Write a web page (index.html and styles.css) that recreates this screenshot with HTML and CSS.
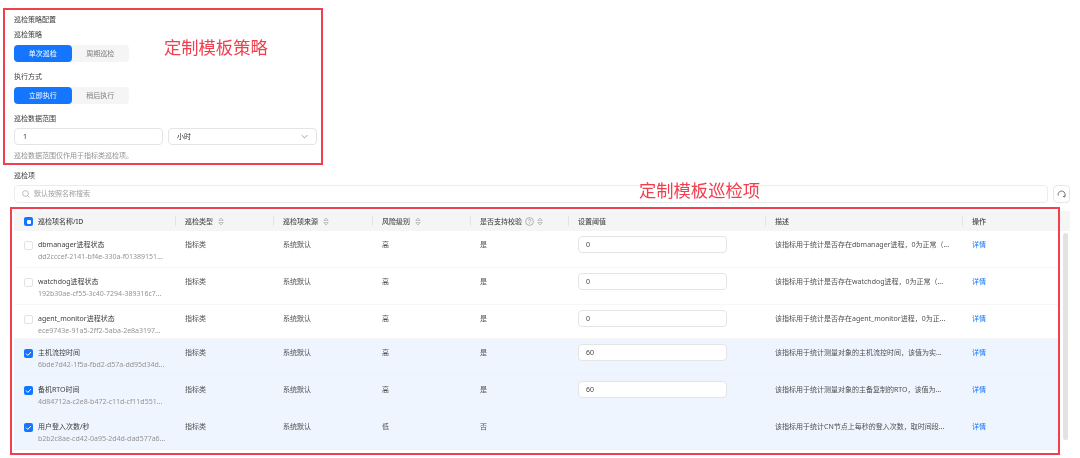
FILE: index.html
```html
<!DOCTYPE html>
<html lang="zh">
<head>
<meta charset="utf-8">
<title>定制模板</title>
<link rel="stylesheet" href="styles.css">
</head>
<body>
<main class="page">
  <section class="strategy">
    <div class="label first">巡检策略配置</div>
    <div class="label l-a">巡检策略</div>
    <div class="seg"><span class="seg-item on">单次巡检</span><span class="seg-item">周期巡检</span></div>
    <div class="label l-b">执行方式</div>
    <div class="seg"><span class="seg-item on">立即执行</span><span class="seg-item">稍后执行</span></div>
    <div class="label l-b">巡检数据范围</div>
    <div class="range">
      <div class="field">1</div>
      <div class="field select">小时<svg class="chev" viewBox="0 0 10 6"><path d="M1 1l4 4 4-4" fill="none" stroke="#777" stroke-width="1"/></svg></div>
    </div>
    <div class="hint">巡检数据范围仅作用于指标类巡检项。</div>
    <div class="note note-a">定制模板策略</div>
  </section>

  <section class="items">
    <div class="label">巡检项</div>
    <div class="search-row">
      <div class="search">
        <svg class="s-ico" viewBox="0 0 10 10"><circle cx="4.4" cy="4.4" r="3.6" fill="none" stroke="#999" stroke-width=".8"/><path d="M7 7l2.4 2.4" stroke="#999" stroke-width=".8"/></svg>
        <span>默认按照名称搜索</span>
      </div>
      <button class="refresh" type="button"><svg viewBox="0 0 10 10"><path d="M1.4 6.2A3.9 3.9 0 1 1 8.2 7.4" fill="none" stroke="#555" stroke-width=".9"/><path d="M9.4 6.2L8.2 8 6.6 6.9" fill="none" stroke="#555" stroke-width=".9"/></svg></button>
    </div>
    <div class="note note-b">定制模板巡检项</div>

    <div class="table">
      <div class="frame"></div>
      <div class="scroll"></div>
      <div class="thead">
        <div class="th th-name"><span class="cb all"></span>巡检项名称/ID</div>
        <div class="th">巡检类型<svg class="sort" viewBox="0 0 6 9"><path d="M.8 3.4L3 1l2.2 2.4zM.8 5.6L3 8l2.2-2.4z" fill="none" stroke="#aaa" stroke-width=".7"/></svg></div>
        <div class="th">巡检项来源<svg class="sort" viewBox="0 0 6 9"><path d="M.8 3.4L3 1l2.2 2.4zM.8 5.6L3 8l2.2-2.4z" fill="none" stroke="#aaa" stroke-width=".7"/></svg></div>
        <div class="th">风险级别<svg class="sort" viewBox="0 0 6 9"><path d="M.8 3.4L3 1l2.2 2.4zM.8 5.6L3 8l2.2-2.4z" fill="none" stroke="#aaa" stroke-width=".7"/></svg></div>
        <div class="th">是否支持校验<svg class="help" viewBox="0 0 9 9"><circle cx="4.5" cy="4.5" r="3.9" fill="none" stroke="#888" stroke-width=".6"/><path d="M3.3 3.6a1.2 1.2 0 1 1 1.7 1.1c-.4.2-.5.4-.5.8M4.5 6.2v.7" fill="none" stroke="#888" stroke-width=".6"/></svg><svg class="sort" viewBox="0 0 6 9"><path d="M.8 3.4L3 1l2.2 2.4zM.8 5.6L3 8l2.2-2.4z" fill="none" stroke="#aaa" stroke-width=".7"/></svg></div>
        <div class="th">设置阈值</div>
        <div class="th">描述</div>
        <div class="th">操作</div>
      </div>

      <div class="row">
        <div class="name"><span class="cb"></span><div><div class="title">dbmanager进程状态</div><div class="id">dd2cccef-2141-bf4e-330a-f01389151...</div></div></div>
        <div class="td">指标类</div><div class="td">系统默认</div><div class="td">高</div><div class="td">是</div>
        <div class="td-input"><div class="value">0</div></div>
        <div class="td">该指标用于统计是否存在dbmanager进程，0为正常（...</div>
        <div class="td link">详情</div>
      </div>
      <div class="row">
        <div class="name"><span class="cb"></span><div><div class="title">watchdog进程状态</div><div class="id">192b30ae-cf55-3c40-7294-389316c7...</div></div></div>
        <div class="td">指标类</div><div class="td">系统默认</div><div class="td">高</div><div class="td">是</div>
        <div class="td-input"><div class="value">0</div></div>
        <div class="td">该指标用于统计是否存在watchdog进程，0为正常（...</div>
        <div class="td link">详情</div>
      </div>
      <div class="row short">
        <div class="name"><span class="cb"></span><div><div class="title">agent_monitor进程状态</div><div class="id">ece9743e-91a5-2ff2-5aba-2e8a3197...</div></div></div>
        <div class="td">指标类</div><div class="td">系统默认</div><div class="td">高</div><div class="td">是</div>
        <div class="td-input"><div class="value">0</div></div>
        <div class="td">该指标用于统计是否存在agent_monitor进程，0为正...</div>
        <div class="td link">详情</div>
      </div>
      <div class="row sel">
        <div class="name"><span class="cb on"><svg viewBox="0 0 9 9"><path d="M2 4.6l1.8 1.8L7 3" fill="none" stroke="#fff" stroke-width="1"/></svg></span><div><div class="title">主机流控时间</div><div class="id">6bde7d42-1f5a-fbd2-d57a-dd95d34d...</div></div></div>
        <div class="td">指标类</div><div class="td">系统默认</div><div class="td">高</div><div class="td">是</div>
        <div class="td-input"><div class="value">60</div></div>
        <div class="td">该指标用于统计测量对象的主机流控时间，该值为实...</div>
        <div class="td link">详情</div>
      </div>
      <div class="row sel">
        <div class="name"><span class="cb on"><svg viewBox="0 0 9 9"><path d="M2 4.6l1.8 1.8L7 3" fill="none" stroke="#fff" stroke-width="1"/></svg></span><div><div class="title">备机RTO时间</div><div class="id">4d84712a-c2e8-b472-c11d-cf11d551...</div></div></div>
        <div class="td">指标类</div><div class="td">系统默认</div><div class="td">高</div><div class="td">是</div>
        <div class="td-input"><div class="value">60</div></div>
        <div class="td">该指标用于统计测量对象的主备复制的RTO，该值为...</div>
        <div class="td link">详情</div>
      </div>
      <div class="row sel">
        <div class="name"><span class="cb on"><svg viewBox="0 0 9 9"><path d="M2 4.6l1.8 1.8L7 3" fill="none" stroke="#fff" stroke-width="1"/></svg></span><div><div class="title">用户登入次数/秒</div><div class="id">b2b2c8ae-cd42-0a95-2d4d-dad577a6...</div></div></div>
        <div class="td">指标类</div><div class="td">系统默认</div><div class="td">低</div><div class="td">否</div>
        <div class="td-input"></div>
        <div class="td">该指标用于统计CN节点上每秒的登入次数，取时间段...</div>
        <div class="td link">详情</div>
      </div>
    </div>
  </section>
</main>
</body>
</html>
```

FILE: styles.css
```css
* { box-sizing: border-box; }
html, body { margin: 0; padding: 0; background: #fff; }
body {
  width: 1080px;
  height: 458px;
  overflow: hidden;
  font-family: "Noto Sans", "Noto Sans CJK SC", sans-serif;
  font-size: 7px;
  line-height: 12px;
  color: #3a3a3a;
}
.page { padding-top: 8px; filter: blur(0.4px); height: 458px; }

.strategy {
  position: relative;
  margin-left: 3px;
  width: 320px;
  height: 157px;
  border: 2px solid #f0404f;
  padding: 3px 0 0 9px;
}
.label, .hint, .title, .id, .td { height: 12px; line-height: 14px; }
.label.l-a { margin-top: 3px; }
.label.l-b { margin-top: 8px; }

.seg { display: flex; width: 115px; height: 17px; margin-top: 5px; background: #f5f5f5; border-radius: 4px; }
.seg-item { flex: 1; display: flex; align-items: center; justify-content: center; padding-top: 1px; color: #808080; border-radius: 4px; }
.seg-item.on { background: #1476ff; color: #fff; }

.range { display: flex; gap: 5px; margin-top: 4px; }
.field {
  display: flex;
  align-items: center;
  justify-content: space-between;
  width: 149px;
  height: 17px;
  padding: 0 8px;
  border: 1px solid #e4e4e4;
  border-radius: 4px;
  color: #333;
}
.chev { width: 7px; height: 5px; }
.hint { margin-top: 4px; color: #949494; }

.note { position: absolute; font-size: 17.3px; line-height: 24px; color: #f0404f; white-space: nowrap; }
.note-a { left: 159px; top: 26px; }
.note-b { left: 639px; top: 14px; }

.items { position: relative; padding: 4px 0 0 14px; }
.search-row { display: flex; gap: 5px; margin-top: 4px; width: 1056px; }
.search {
  flex: 1;
  display: flex;
  align-items: center;
  gap: 4px;
  height: 18px;
  padding-left: 7px;
  border: 1px solid #ececec;
  border-radius: 4px;
  color: #a0a0a0;
}
.s-ico { width: 8px; height: 8px; }
.refresh {
  width: 17px;
  height: 18px;
  padding: 0;
  display: flex;
  align-items: center;
  justify-content: center;
  background: #fff;
  border: 1px solid #e6e6e6;
  border-radius: 4px;
}
.refresh svg { width: 9px; height: 9px; }

.table { position: relative; margin-top: 8px; width: 1056px; }
.frame {
  position: absolute;
  left: -4px;
  top: -4px;
  width: 1050px;
  height: 248px;
  border: 2px solid #f0404f;
  z-index: 2;
}
.scroll {
  position: absolute;
  left: 1049px;
  top: 22px;
  width: 5px;
  height: 207px;
  background: #e2e2e2;
  border-radius: 3px;
}

.thead, .row {
  display: grid;
  grid-template-columns: 161px 98px 99px 98px 98px 197px 197px 1fr;
}
.thead { height: 20px; background: #f5f5f5; font-weight: 500; }
.th {
  position: relative;
  display: flex;
  align-items: center;
  gap: 5px;
  padding: 1px 0 0 10px;
  color: #505050;
}
.th::before {
  content: "";
  position: absolute;
  left: 0;
  top: 5px;
  height: 10px;
  border-left: 1px solid #e4e4e4;
}
.th-name::before { display: none; }
.sort { width: 6px; height: 9px; }
.help { width: 9px; height: 9px; margin-right: -2px; margin-left: -2px; }

.row {
  height: 37px;
  margin-right: 10px;
  border-bottom: 1px solid #f7f7f7;
}
.row.short { height: 34px; }
.row.sel { background: #eef5fe; border-bottom-color: #ecf3fd; }

.name { display: flex; gap: 5px; padding: 7px 0 0 10px; }
.title { color: #404040; white-space: nowrap; }
.id { color: #949494; white-space: nowrap; }
.td { padding: 7px 0 0 10px; height: auto; color: #505050; white-space: nowrap; }
.td-input { padding: 5px 0 0 10px; }
.value {
  width: 149px;
  height: 17px;
  padding-left: 7px;
  display: flex;
  align-items: center;
  background: #fff;
  border: 1px solid #e4e4e4;
  border-radius: 4px;
  color: #444;
}
.link { color: #1476ff; }

.cb {
  flex: none;
  display: block;
  width: 9px;
  height: 9px;
  margin-top: 3px;
  background: #fff;
  border: 1px solid #e2e2e2;
  border-radius: 2px;
}
.cb svg { display: block; width: 9px; height: 9px; }
.cb.on { background: #1476ff; border: 0; }
.cb.all {
  margin-top: 0;
  background: #1476ff;
  border: 0;
  position: relative;
}
.cb.all::after {
  content: "";
  position: absolute;
  left: 2.5px;
  top: 2.5px;
  width: 4px;
  height: 4px;
  background: #fff;
  border-radius: 1px;
}
```
